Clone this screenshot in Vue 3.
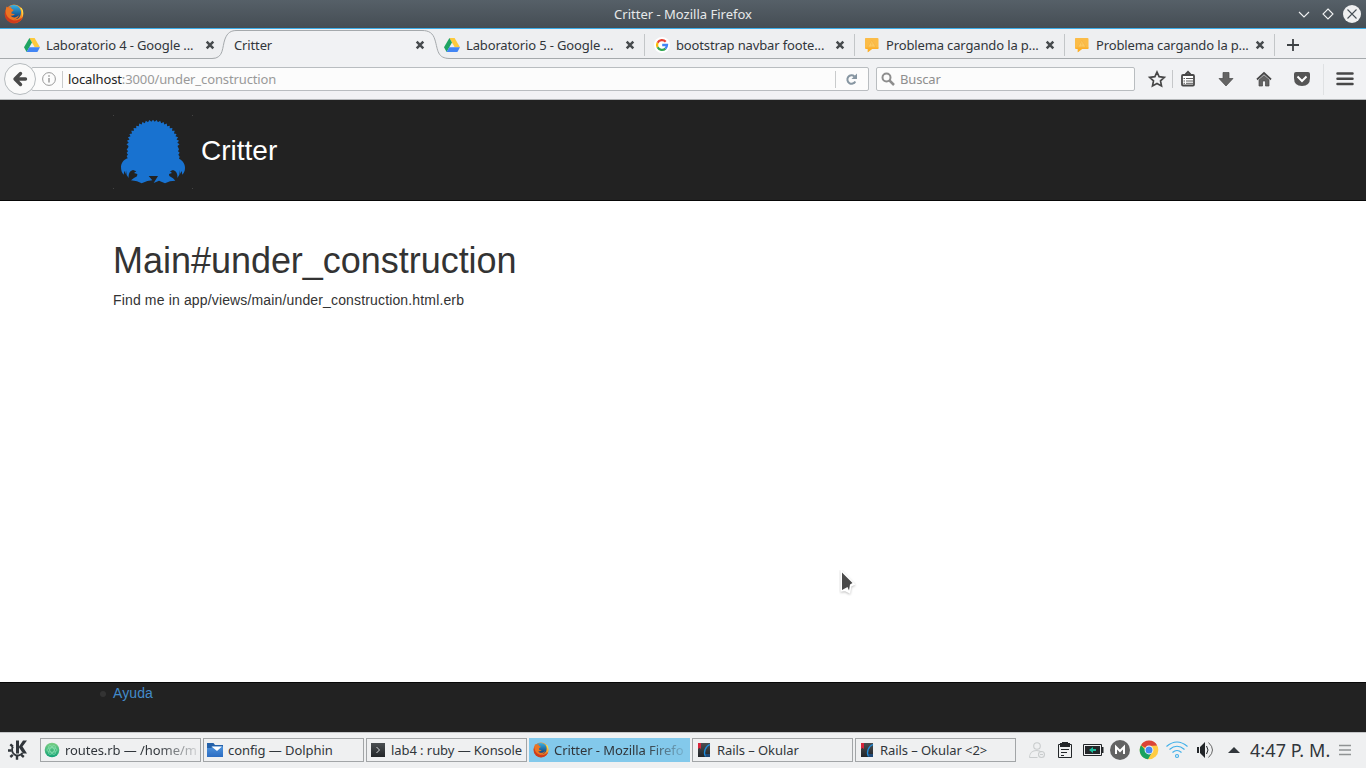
<script setup>
const tabs = [
  { title: 'Laboratorio 4 - Google ...', icon: 'drive' },
  { title: 'Critter', icon: '', active: true },
  { title: 'Laboratorio 5 - Google ...', icon: 'drive' },
  { title: 'bootstrap navbar foote...', icon: 'google', sep: true },
  { title: 'Problema cargando la p...', icon: 'warn', sep: true },
  { title: 'Problema cargando la p...', icon: 'warn', sep: true },
]
const tasks = [
  { title: 'routes.rb — /home/m', icon: 'atom', fade: true },
  { title: 'config — Dolphin', icon: 'folder' },
  { title: 'lab4 : ruby — Konsole', icon: 'konsole' },
  { title: 'Critter - Mozilla Firefo', icon: 'firefox', fade: true, active: true },
  { title: 'Rails – Okular', icon: 'okular' },
  { title: 'Rails – Okular <2>', icon: 'okular' },
]

// Jagged dome of fur for the logo
const fur = (() => {
  const pts = []
  const n = 46
  for (let i = 0; i <= n; i++) {
    const a = Math.PI * (1 - i / n)
    const k = i % 2 ? 1.01 : 0.93
    const x = 189 + 79 * k * Math.cos(a)
    const y = 138 - 78 * k * Math.sin(a)
    pts.push(`${x.toFixed(1)} ${y.toFixed(1)}`)
  }
  return pts.join('L')
})()
const critter =
  `M113 175L110 168L114 164L110 158L114 154L110 148L114 144L${fur}` +
  'L267 148L264 154L269 158L265 164L269 170L267 176' +
  'C279 181 285 193 285 204C285 213 281 221 277 224L275 213L270 222L270 210L268 224L262 234' +
  'C264 223 258 212 249 210L240 214L246 219L237 222L238 228L249 235L256 242L240 244L225 250L207 242L191 249' +
  'L204 228L176 228L187 241L172 243L155 250L141 244L123 241L132 234L141 229L142 222L132 219L139 214L129 210' +
  'C119 212 115 223 116 234L110 225L108 211L107 223L103 212L101 224C95 218 93 209 93 200C94 188 102 178 113 175Z'
</script>

<template>
  <div class="desktop">
    <svg class="defs" width="0" height="0">
      <defs>
        <radialGradient id="fox" cx=".65" cy=".35" r=".8"><stop offset="0" stop-color="#ffdf45" /><stop offset=".5" stop-color="#f58220" /><stop offset="1" stop-color="#b9281b" /></radialGradient>
        <linearGradient id="globe" x2="0" y2="1"><stop offset="0" stop-color="#37b2e5" /><stop offset="1" stop-color="#0c3470" /></linearGradient>
        <linearGradient id="folderFill" x2="0" y2="1"><stop offset="0" stop-color="#4d92dc" /><stop offset="1" stop-color="#2c6dc2" /></linearGradient>
        <linearGradient id="atomFill" x2="0" y2="1"><stop offset="0" stop-color="#7bcf84" /><stop offset="1" stop-color="#12a276" /></linearGradient>
        <linearGradient id="darkFill" x2="0" y2="1"><stop offset="0" stop-color="#4b4f52" /><stop offset="1" stop-color="#222528" /></linearGradient>
        <symbol id="firefox" viewBox="0 0 20 20">
          <circle cx="10" cy="10" r="9.4" fill="url(#fox)" />
          <path d="M5.600 2.300C9 .1 14 1 16 4.500c2 3.500 1 8-2 10-3 1.500-6 .5-7-1-2-2-2-7-1.400-11.200z" fill="url(#globe)" />
          <path d="M2.500 2.600c.8 1 1.700 1.300 3 1.200l1.700-1c0 1.200.2 1.800.8 2.300l1.700.6c0 .9-1.200 1.500-2 2.100-.4.6 0 1.500-.2 2 1.500-.5 2.500.3 3.300.2-.9 1.600-2.600 1.900-4.200 1.500 1.500 2.400 5.400 2.900 8.600-.4-1.200 4.200-5.200 5.300-8 4.400C2.500 14.300.7 8.500 2.500 2.600z" fill="#ec7422" />
          <path d="M1.100 7c-.8 7 4 11.900 9 12 4.600 0 8-3 9-7-3 4-7 5.500-11 4C4 14.500 1.600 11 1.100 7z" fill="#cf3b1d" />
          <path d="M16.200 4c2.700 3.300 2.800 8 .5 11.300 2.900-3.300 3.400-8 1-11.400L16.200 4z" fill="#ffe04b" />
        </symbol>
        <symbol id="drive" viewBox="0 0 16 14">
          <path d="M5.400 0h5.200L16 9.300h-5.300z" fill="#fdca3d" /><path d="M5.400 0L0 9.300 2.600 14 8 4.600z" fill="#1fa463" /><path d="M5.200 9.300H16L13.400 14H2.600z" fill="#4285f4" />
        </symbol>
        <symbol id="google" viewBox="0 0 16 16">
          <circle cx="8" cy="8" r="8" fill="#fff" />
          <g fill="none" stroke-width="2.300"><path d="M11.700 4.700A5 5 0 0 0 3.600 5.700" stroke="#ea4335" /><path d="M3.600 5.700a5 5 0 0 0 0 4.600" stroke="#fbbc05" /><path d="M3.600 10.300a5 5 0 0 0 7.800 1.300" stroke="#34a853" /><path d="M11.400 11.600A5 5 0 0 0 13 8H8.200" stroke="#4285f4" /></g>
        </symbol>
        <symbol id="warn" viewBox="0 0 16 16">
          <path d="M1.500 1h12q1 0 1 1v9q0 1-1 1H8l-4.200 3.300V12H2q-1 0-1-1V2q0-1 .5-1z" fill="#fbbc48" /><path d="M1 10.500h13.500v.5q0 1-1 1H8l-4.200 3.300V12H2z" fill="#fdaf28" /><path d="M7.800 3.300l4 6.700h-8z" fill="#fdca61" stroke="#f6b03d" stroke-width=".6" /><path d="M7.800 5.500v2.300M7.800 8.600v.8" stroke="#f6b03d" stroke-width=".8" />
        </symbol>
        <symbol id="atom" viewBox="0 0 16 16">
          <circle cx="8" cy="8" r="7.300" fill="url(#atomFill)" /><g fill="none" stroke="#94e7ba" stroke-width=".6"><ellipse cx="8" cy="8" rx="5" ry="2.200" /><ellipse cx="8" cy="8" rx="5" ry="2.200" transform="rotate(60 8 8)" /><ellipse cx="8" cy="8" rx="5" ry="2.200" transform="rotate(-60 8 8)" /></g>
        </symbol>
        <symbol id="folder" viewBox="0 0 16 16">
          <path d="M0 1h6.500l1.500 2h8v12H0z" fill="#2461aa" /><path d="M0 15V6h4l2-1.500h10V15z" fill="url(#folderFill)" /><path d="M4.500 4.500H15L10 9z" fill="#fff" />
        </symbol>
        <symbol id="konsole" viewBox="0 0 16 16">
          <path d="M1 1h14v14H1z" fill="url(#darkFill)" /><path d="M6.500 5l3 3-3 3" fill="none" stroke="#d5d8da" stroke-width="1" />
        </symbol>
        <symbol id="okular" viewBox="0 0 16 16">
          <path d="M2 1h12v14H2z" fill="url(#darkFill)" /><path d="M2 1h3v6L3.500 5.800 2 7z" fill="#d8243b" /><path d="M14 2.500C9.500 4 7 10.500 9.500 14.500" fill="none" stroke="#1f8fe0" stroke-width="1.300" /><path d="M9 12h5v3h-4z" fill="#1a5ea8" opacity=".6" />
        </symbol>
      </defs>
    </svg>

    <header class="titlebar">
      <svg class="app-icon" width="20" height="20"><use href="#firefox" /></svg>
      <span class="window-title">Critter - Mozilla Firefox</span>
      <svg class="window-buttons" width="68" height="20" fill="none" stroke="#eff0f1" stroke-width="1.100">
        <path d="M2 8l5 5 5-5M31 5l5 5-5 5-5-5z" /><circle cx="55" cy="10" r="9" fill="#eff0f1" stroke="none" /><path d="M50.500 5.500l9 9M59.500 5.500l-9 9" stroke="#475057" />
      </svg>
    </header>

    <nav class="tabs">
      <div v-for="(t, i) in tabs" :key="i" class="tab" :class="{ active: t.active, sep: t.sep }">
        <svg v-if="t.active" class="tab-shape" width="242" height="30">
          <path d="M0 30V29.500H2C14 29.500 12 18 15 10 17.500 3.500 21 1.500 27 1.500H212C219 1.500 223 4 225 11 228 21 227 29.500 240 29.500H242V30Z" fill="#f1f2f4" />
          <path d="M0 29.500H2C14 29.500 12 18 15 10 17.500 3.500 21 1.500 27 1.500H212C219 1.500 223 4 225 11 228 21 227 29.500 240 29.500H242" fill="none" stroke="#a5a9ac" />
        </svg>
        <svg v-if="t.icon" class="favicon" :class="t.icon" width="16" height="16"><use :href="'#' + t.icon" /></svg>
        <span class="tab-title">{{ t.title }}</span>
        <svg class="close" width="10" height="10"><path d="M1.700 1.700l6.600 6.600M8.300 1.700L1.700 8.300" stroke="#474b4e" stroke-width="2.500" /></svg>
      </div>
      <svg class="newtab" width="14" height="14"><path d="M7 1v12M1 7h12" stroke="#3d4144" stroke-width="1.800" /></svg>
    </nav>

    <div class="toolbar">
      <svg class="back" width="32" height="32"><circle cx="16" cy="16" r="15.500" fill="#fafafa" stroke="#b5babd" /><path d="M16.500 10.500L11 16l5.500 5.500M11.500 16h10" fill="none" stroke="#494949" stroke-width="3.400" stroke-linejoin="round" stroke-linecap="round" /></svg>
      <div class="urlbar">
        <svg class="info" width="14" height="14" fill="none" stroke="#999"><circle cx="7" cy="7" r="6.400" /><path d="M7 6v4.500M7 3.300v1.500" stroke-width="1.500" /></svg>
        <i class="divider"></i>
        <span class="url"><b>localhost</b>:3000/under_construction</span>
        <i class="divider reload-divider"></i>
        <svg class="reload" width="12" height="13"><path d="M9.300 8.500A4.200 4.200 0 1 1 8.400 3.400" fill="none" stroke="#8796a2" stroke-width="2" /><path d="M11 .5V6H5.500z" fill="#8796a2" /></svg>
      </div>
      <div class="search">
        <svg width="14" height="14" fill="none" stroke="#8e8e8e"><circle cx="5.500" cy="5.500" r="4" stroke-width="2" /><path d="M8.500 8.500l4.500 4.500" stroke-width="2.500" /></svg>
        <span>Buscar</span>
      </div>
      <svg class="tools" width="220" height="40" viewBox="1146 59 220 40">
        <path d="M1157 72l2.100 4.700 5.200.6-3.800 3.500 1 5.100-4.500-2.500-4.500 2.500 1-5.100-3.800-3.500 5.200-.6z" fill="none" stroke="#474747" stroke-width="1.700" />
        <path d="M1172.500 70v18" stroke="#c5c7c9" />
        <path d="M1185.500 74.500l2.500-2.500 2.500 2.500" fill="none" stroke="#474747" stroke-width="2" />
        <rect x="1182" y="75" width="12" height="10.500" rx="1" fill="#fff" stroke="#474747" stroke-width="1.800" />
        <path d="M1183.500 78.500h1.500M1186 78.500h7M1183.500 81h1.500M1186 81h7M1183.500 83.300h1.500M1186 83.300h7" stroke="#474747" stroke-width=".9" />
        <path d="M1223 72.500h6v6h4l-7 7.500-7-7.500h4z" fill="#646464" stroke="#474747" stroke-width=".7" />
        <path d="M1257 79.500l7-6.500 7 6.500" fill="none" stroke="#474747" stroke-width="1.800" /><path d="M1259 80l5-4.500 5 4.500v6h-3.500v-5h-3v5h-3.500z" fill="#646464" stroke="#474747" stroke-width=".7" />
        <path d="M1296 72h12q2 0 2 2v4q0 8-8 8t-8-8v-4q0-2 2-2z" fill="#555" /><path d="M1297.500 76.500l4.500 4.500 4.500-4.500" fill="none" stroke="#fff" stroke-width="2" />
        <path d="M1323.500 64v31" stroke="#dfe1e3" />
        <path d="M1337.500 73.500h15M1337.500 78.700h15M1337.500 83.900h15" stroke="#474747" stroke-width="2.500" stroke-linecap="round" />
      </svg>
    </div>

    <main class="page">
      <div class="navbar">
        <svg class="logo" width="80" height="74" viewBox="69 45 240 222">
          <path :d="critter" fill="#1872d0" />
          <path d="M69 45h3v3h-3zM306 45h3v3h-3zM69 264h3v3h-3zM306 264h3v3h-3z" fill="#444" />
        </svg>
        <span class="brand">Critter</span>
      </div>
      <section class="content">
        <h1>Main#under_construction</h1>
        <p>Find me in app/views/main/under_construction.html.erb</p>
      </section>
      <footer class="foot"><i class="bullet"></i><a>Ayuda</a></footer>
      <svg class="pointer" width="18" height="26"><path d="M3 2.500V20l3-.5 4 2 1-6 3-1.500z" fill="#fff" stroke="#fff" stroke-width="3" class="glow" /><path d="M3 2.500V20L8.500 17 10 20.500 11 14.500 13.500 13z" fill="#4a4a4a" /></svg>
    </main>

    <footer class="taskbar">
      <svg class="kmenu" width="20" height="20"><path d="M5 6.500A5.500 5.500 0 1 0 14.500 13" fill="none" stroke="#31363b" stroke-width="1.900" /><path d="M2.300 4.300l2.500 2.200M0 10.500h3.500M2.300 17l2.500-2.200M9 16v3.700M15.800 17l-2.500-2.200" stroke="#31363b" stroke-width="2.400" /><path d="M8 .5h3v6L15 .5h4l-4.500 6L19 13.500h-4l-4-6v6H8z" fill="#31363b" /></svg>
      <div class="tasks">
        <div v-for="(t, i) in tasks" :key="i" class="task" :class="{ active: t.active }">
          <svg width="16" height="16"><use :href="'#' + t.icon" /></svg>
          <span :class="{ fade: t.fade }">{{ t.title }}</span>
        </div>
      </div>
      <svg class="tray" width="222" height="35" viewBox="1024 733 222 35">
        <g fill="none" stroke="#c9cccd" stroke-width="1.100"><circle cx="1037" cy="746" r="3.300" /><path d="M1029.500 757.500c0-4.500 3-7 7-7 2.500 0 4 .7 5 1.700M1029.500 757.500h8" /><circle cx="1041.500" cy="754.500" r="3" /><path d="M1040 754.500h3" /></g>
        <path d="M1058.500 744.500h13v13h-13z" fill="none" stroke="#232629" /><path d="M1060 743h2v-1h6v1h2v4h-10z" fill="#232629" /><path d="M1061 749.500h8M1061 752.500h6M1061 755.500h3" stroke="#232629" />
        <path d="M1083.500 744.500h18v11h-18z" fill="none" stroke="#232629" /><path d="M1085 746h15v8h-15zM1102 747h1.500v6h-1.500z" fill="#232629" /><path d="M1089 750l4-3v2h3v2h-3v2z" fill="#1abc9c" />
        <circle cx="1120" cy="750" r="10" fill="#636363" /><path d="M1116 754v-7l4 4 4-4v7" fill="none" stroke="#fff" stroke-width="2" />
        <circle cx="1149" cy="750" r="9.300" fill="#fc4" /><path d="M1149 750l-8-4.800A9.300 9.300 0 0 1 1157.200 745.500L1149 746z" fill="#db4437" /><path d="M1141 745.200A9.300 9.300 0 0 0 1148 759.300l4-7-3 1.500z" fill="#1aa260" /><circle cx="1149" cy="750" r="4.400" fill="#fff" /><circle cx="1149" cy="750" r="3.500" fill="#4688f1" />
        <g fill="none" stroke="#3daee9" stroke-width="1.100"><path d="M1166.500 746.500q10.500-9 21 0M1169.500 749.500q7.500-6.500 15 0M1172.500 752.500q4.500-4 9 0" /><circle cx="1177" cy="756" r="1.500" /></g>
        <path d="M1197 747h2v6h-2zM1200 747l5-5v16l-5-5z" fill="#232629" /><path d="M1206.500 746q3 4 0 8" fill="none" stroke="#232629" /><path d="M1208.500 742.500q8 7.500 0 15" fill="none" stroke="#666" />
        <path d="M1228 753h12l-6-6z" fill="#31363b" />
      </svg>
      <span class="clock">4:47 P. M.</span>
      <svg class="panel-menu" width="12" height="12"><path d="M0 1.500h12M0 6h12M0 10.500h12" stroke="#909394" stroke-width="1.300" /></svg>
    </footer>
  </div>
</template>

<style>
html, body { margin: 0; overflow: hidden; }
</style>

<style scoped>
.desktop { position: relative; width: 1366px; height: 768px; display: flex; flex-direction: column; overflow: hidden; font: 13px/18px "Noto Sans", sans-serif; color: #31363b; }
.desktop * { box-sizing: border-box; }
.defs { position: absolute; }
svg { display: block; flex: none; }
span { white-space: pre; }

.titlebar { height: 29px; flex: none; display: flex; align-items: center; background: linear-gradient(#566068, #454d54); border-bottom: 1px solid #3daee9; color: #e7e9ea; padding: 0 1px 0 4px; }
.window-title { flex: 1; text-align: center; padding-left: 45px; }

.tabs { height: 30px; flex: none; display: flex; align-items: center; padding-left: 15px; background: #eeeff1; box-shadow: inset 0 -1px #a5a9ac; }
.tab { position: relative; width: 210px; height: 30px; flex: none; display: flex; align-items: center; padding: 2px 10px 0 9px; }
.tab.sep::before { content: ""; position: absolute; left: -1px; top: 5px; width: 1px; height: 22px; background: #c3c6c8; }
.tab:last-of-type::after { content: ""; position: absolute; right: 0; top: 5px; width: 1px; height: 22px; background: #c3c6c8; }
.tab-shape { position: absolute; left: -15px; top: 0; }
.favicon { margin-right: 6px; }
.tab-title { position: relative; flex: 1; letter-spacing: -.14px; padding-bottom: 1px; }
.close { position: relative; }
.newtab { margin-left: 11px; margin-top: 2px; }

.toolbar { height: 41px; flex: none; display: flex; align-items: center; background: #f1f2f4; border-bottom: 1px solid #b5b8ba; padding-left: 4px; }
.back { position: relative; }
.urlbar, .search { height: 24px; display: flex; align-items: center; background: #fcfcfc; border: 1px solid #b9bdc0; border-radius: 2px; }
.urlbar { width: 838px; margin-left: -5px; padding-left: 10px; }
.divider { width: 1px; height: 17px; background: #c9cbcc; margin: 0 5px 0 6px; }
.url { color: #999; flex: 1; letter-spacing: -.12px; }
.url b { font-weight: 400; color: #222; }
.reload { margin: 0 10px 0 5px; }
.search { width: 259px; margin-left: 7px; padding-left: 4px; color: #8e8e8e; letter-spacing: -.15px; }
.search span { margin-left: 5px; }
.tools { margin-left: 11px; }

.page { position: relative; flex: 1; display: flex; flex-direction: column; background: #fff; font: 14px/20px "Liberation Sans", Arial, sans-serif; color: #333; }
.navbar { height: 101px; flex: none; display: flex; background: #222; border-bottom: 1px solid #080808; padding: 15px 0 0 113px; }
.brand { color: #fff; font-size: 28px; line-height: 40px; margin: 16px 0 0 8px; }
.content { flex: 1; padding: 40px 113px 0; }
h1 { margin: 0 0 9px; font-size: 36px; line-height: 40px; font-weight: 400; letter-spacing: -.03px; }
p { margin: 0; letter-spacing: .15px; }
.foot { height: 50px; flex: none; display: flex; align-items: flex-start; background: #222; border-top: 1px solid #080808; padding-left: 100px; }
.bullet { width: 6px; height: 6px; border-radius: 50%; background: #333; margin: 8px 7px 0 0; }
.foot a { color: #428bca; letter-spacing: .1px; }
.pointer { position: absolute; left: 839px; top: 470px; }
.glow { filter: drop-shadow(0 1px 1px rgba(0, 0, 0, .25)); }

.taskbar { height: 36px; flex: none; display: flex; align-items: center; background: #eff0f1; border-top: 1px solid #c4c6c8; padding-left: 8px; }
.kmenu { margin-bottom: 1px; }
.tasks { display: flex; gap: 2px; margin: 0 0 1px 12px; }
.task { width: 161px; height: 24px; display: flex; align-items: center; border: 1px solid #a2a5a7; padding: 0 0 0 3px; overflow: hidden; }
.task svg { margin-right: 5px; }
.task span { flex: none; letter-spacing: -.07px; }
.task.active { background: #83c9eb; border-color: #83c9eb; }
.fade { -webkit-mask-image: linear-gradient(90deg, #000 70%, rgba(0, 0, 0, .15)); mask-image: linear-gradient(90deg, #000 70%, rgba(0, 0, 0, .15)); }
.tray { margin-left: 8px; }
.clock { font-size: 18px; line-height: 24px; margin: 0 0 2px 4px; width: 81px; letter-spacing: .07px; }
.panel-menu { margin: 0 0 1px 8px; }
</style>
